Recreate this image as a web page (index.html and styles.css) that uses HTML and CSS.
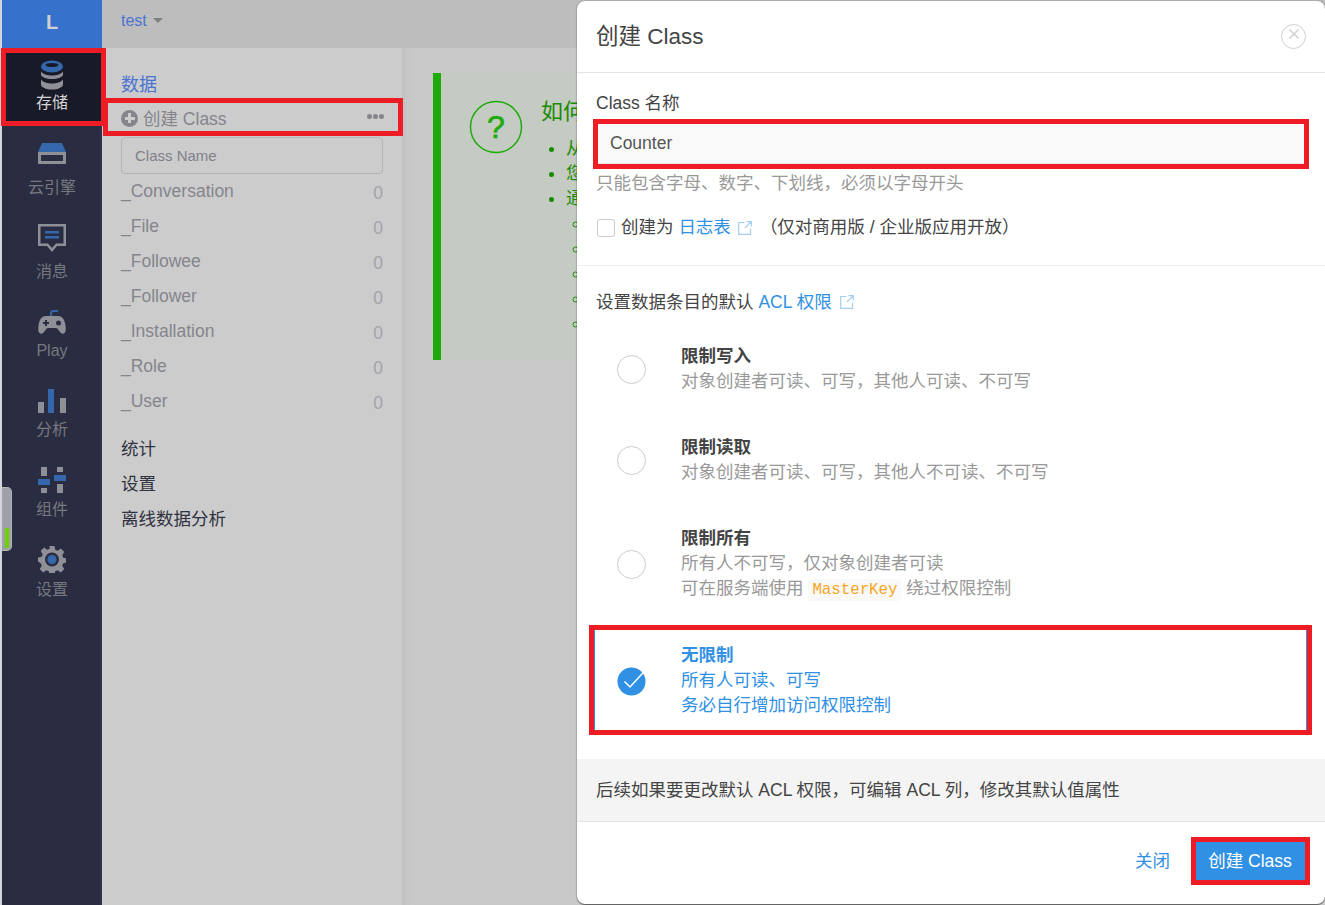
FILE: index.html
```html
<!DOCTYPE html>
<html lang="zh-CN">
<head>
<meta charset="utf-8">
<title>创建 Class</title>
<link rel="stylesheet" href="styles.css">
</head>
<body>
<div class="app">
  <nav class="rail">
    <div class="logo">L</div>
    <a class="rail-item item-db active">
      <svg width="28" height="30" viewBox="0 0 28 30"><path class="g" d="M3 11.500v3c0 2.600 5 4.500 11 4.500s11-1.900 11-4.500v-3c-2 2.600-6.500 4-11 4s-9-1.400-11-4zM3 19.500v5c0 2.900 5 5 11 5s11-2.100 11-5v-5c-2 2.700-6.500 4-11 4s-9-1.300-11-4z"/><ellipse class="b" cx="14" cy="6.500" rx="11" ry="6"/><ellipse cx="14" cy="5" rx="6.500" ry="2" fill="#181a28"/></svg>
      <span>存储</span>
    </a>
    <a class="rail-item item-engine">
      <svg width="28" height="21" viewBox="0 0 28 21"><path class="b" d="M4 0h20l4 9H0z"/><path class="g" fill-rule="evenodd" d="M0 9h28v12H0zM3 12v6h22v-6z"/></svg>
      <span>云引擎</span>
    </a>
    <a class="rail-item item-msg">
      <svg width="28" height="28" viewBox="0 0 28 28"><path class="g" fill-rule="evenodd" d="M0 0h28v22h-9l-5 6-5-6H0zM2.500 2.500v17h7.500l4 4.500 4-4.500h7.500v-17z"/><path class="b" d="M7 7h14v2.500H7zM7 12h14v2.500H7z"/></svg>
      <span>消息</span>
    </a>
    <a class="rail-item item-play">
      <svg width="28" height="25" viewBox="0 0 28 25"><path class="g" d="M8 6h12c4 0 6 3 7 7 .8 3.500 1.500 8-.5 10-2.200 2-4.500-.5-6-3-.8-1.300-1.500-2-3-2h-7c-1.500 0-2.200.7-3 2-1.500 2.500-3.800 5-6 3-2-2-1.300-6.500-.5-10C2 9 4 6 8 6z"/><path d="M7 10v2H5v2h2v2h2v-2h2v-2H9v-2z" fill="#2a2d42"/><circle cx="20.500" cy="13" r="2.500" fill="#2a2d42"/><path d="M13 6V3.500C13 2 14 1 15.500 1H20" fill="none" stroke="#3567ad" stroke-width="2"/></svg>
      <span>Play</span>
    </a>
    <a class="rail-item item-chart">
      <svg width="28" height="24" viewBox="0 0 28 24"><path class="g" d="M0 13h6v11H0zM22 9h6v15h-6z"/><path class="b" d="M10 0h6v24h-6z"/></svg>
      <span>分析</span>
    </a>
    <a class="rail-item item-comp">
      <svg width="28" height="27" viewBox="0 0 28 27"><path class="g" d="M3 0h6v9H3zM19 0h6v5h-6zM3 21h6v5H3zM19 17h6v9h-6z"/><path class="b" d="M16 8h12v6H16zM0 12h12v6H0z"/></svg>
      <span>组件</span>
    </a>
    <a class="rail-item item-gear">
      <svg width="28" height="27" viewBox="0 0 28 27"><path class="g" fill-rule="evenodd" d="M11.500 0h5l.7 3.700 2.500 1 3.100-2.100 3.500 3.500-2.100 3.100 1 2.500 3.700.7v4.200l-3.700.7-1 2.500 2.100 3.100-3.500 3.500-3.100-2.100-2.500 1-.7 3.700h-5l-.7-3.700-2.500-1-3.100 2.100-3.500-3.500 2.100-3.100-1-2.500L0 15.600v-4.200l3.700-.7 1-2.500-2.100-3.100 3.500-3.500 3.100 2.100 2.500-1zM14 6.500a7 7 0 1 0 0 14 7 7 0 0 0 0-14z"/><circle class="b" cx="14" cy="13.500" r="4.500"/></svg>
      <span>设置</span>
    </a>
  </nav>

  <div class="main">
    <header class="topbar"><a class="app-name">test</a><i class="caret"></i></header>
    <div class="columns">
      <aside class="side">
        <a class="side-head">数据</a>
        <div class="create-row">
          <span class="plus"></span><span class="create-label">创建 Class</span>
          <span class="dots"><i></i><i></i><i></i></span>
        </div>
        <input class="filter" placeholder="Class Name">
        <ul class="class-list">
          <li><span>_Conversation</span><b>0</b></li>
          <li><span>_File</span><b>0</b></li>
          <li><span>_Followee</span><b>0</b></li>
          <li><span>_Follower</span><b>0</b></li>
          <li><span>_Installation</span><b>0</b></li>
          <li><span>_Role</span><b>0</b></li>
          <li><span>_User</span><b>0</b></li>
        </ul>
        <a class="side-link">统计</a>
        <a class="side-link">设置</a>
        <a class="side-link">离线数据分析</a>
      </aside>
      <section class="content">
        <div class="callout">
          <svg class="help" width="54" height="54" viewBox="0 0 54 54"><circle cx="27" cy="27" r="25.500" fill="none" stroke="#1eab0a" stroke-width="1.500"/></svg>
          <span class="help-mark">?</span>
          <div class="callout-body">
            <h4>如何创建</h4>
            <ul>
              <li>从这里开始</li>
              <li>您可以创建</li>
              <li>通过以下方式
                <ul>
                  <li>控制台</li>
                  <li>命令行</li>
                  <li>接口</li>
                  <li>脚本</li>
                  <li>导入</li>
                </ul>
              </li>
            </ul>
          </div>
        </div>
      </section>
    </div>
  </div>

  <div class="scroll-pill"><i></i></div>

  <div class="modal">
    <header class="modal-head">
      <h3>创建 Class</h3>
      <span class="close"><svg width="12" height="12" viewBox="0 0 12 12"><path d="M1.500 1.500l9 9M10.500 1.500l-9 9" stroke="#d0d0d0" stroke-width="1.500"/></svg></span>
    </header>
    <div class="modal-form">
      <label class="field-label">Class 名称</label>
      <input class="name-input" value="Counter">
      <p class="hint">只能包含字母、数字、下划线，必须以字母开头</p>
      <div class="check-row">
        <span class="check"></span>
        <span>创建为 <a class="link">日志表</a></span>
        <svg class="ext" width="14" height="14" viewBox="0 0 14 14"><path d="M6.500 1.500H.7v11.800h11.800V7.500M8.500.7h4.800v4.800M13.300.7L7 7" fill="none" stroke="#a3cff3" stroke-width="1.200"/></svg>
        <span class="note">（仅对商用版 / 企业版应用开放）</span>
      </div>
    </div>
    <div class="modal-acl">
      <div class="acl-title">设置数据条目的默认 <a class="link">ACL 权限</a><svg class="ext ext-acl" width="14" height="14" viewBox="0 0 14 14"><path d="M6.500 1.500H.7v11.800h11.800V7.500M8.500.7h4.800v4.800M13.300.7L7 7" fill="none" stroke="#a3cff3" stroke-width="1.200"/></svg></div>
      <div class="option">
        <span class="radio"></span>
        <div class="opt-text"><strong>限制写入</strong><p>对象创建者可读、可写，其他人可读、不可写</p></div>
      </div>
      <div class="option">
        <span class="radio"></span>
        <div class="opt-text"><strong>限制读取</strong><p>对象创建者可读、可写，其他人不可读、不可写</p></div>
      </div>
      <div class="option opt-last">
        <span class="radio"></span>
        <div class="opt-text"><strong>限制所有</strong><p>所有人不可写，仅对象创建者可读</p><p>可在服务端使用 <code>MasterKey</code> 绕过权限控制</p></div>
      </div>
      <div class="option selected">
        <svg class="radio-on" width="32" height="30" viewBox="0 0 32 30"><circle cx="14.500" cy="15.500" r="14" fill="#3090e4"/><path d="M7.500 15.500l5.500 5.500L29.500 3" fill="none" stroke="#fff" stroke-width="1.500"/></svg>
        <div class="opt-text"><strong>无限制</strong><p>所有人可读、可写</p><p>务必自行增加访问权限控制</p></div>
      </div>
    </div>
    <div class="notice">后续如果要更改默认 ACL 权限，可编辑 ACL 列，修改其默认值属性</div>
    <footer class="modal-foot">
      <a class="link close-link">关闭</a>
      <button class="primary">创建 Class</button>
    </footer>
  </div>

  <div class="mark mark-nav"></div>
  <div class="mark mark-create"></div>
  <div class="mark mark-input"></div>
  <div class="mark mark-option"></div>
  <div class="mark mark-button"></div>
</div>
</body>
</html>
```
FILE: styles.css
```css
* { box-sizing: border-box; }
html, body { margin: 0; padding: 0; height: 100%; overflow: hidden; }
body { font-family: "Liberation Sans", "Noto Sans CJK SC", sans-serif; font-size: 17.5px; line-height: 25px; color: #333; background: #c9c9c9; }
p, h3, h4, ul { margin: 0; padding: 0; }
.app { position: relative; display: flex; width: 1325px; height: 905px; overflow: hidden; padding-left: 2px; background: #d5d5dc; }

/* rail */
.rail { width: 100px; flex: none; background: #2a2d42; box-shadow: inset -3px 0 3px -2px #363a50; display: flex; flex-direction: column; }
.logo { height: 48px; background: #3671cc; color: #d0d0d0; font-size: 20px; font-weight: bold; line-height: 44px; text-align: center; }
.rail-item { display: flex; flex-direction: column; align-items: center; color: #76777f; font-size: 16px; line-height: 20px; flex: none; }
.rail-item .g { fill: #8f8f98; }
.rail-item .b { fill: #3567ad; }
.active { color: #d6d6d6; background: #181a28; }
.item-db { height: 78px; padding-top: 12px; gap: 3px; }
.item-engine { height: 84px; padding-top: 17px; gap: 14px; }
.item-msg { height: 84px; padding-top: 14px; gap: 10px; }
.item-play { height: 79px; padding-top: 16px; gap: 6px; }
.item-chart { height: 79px; padding-top: 16px; gap: 7px; }
.item-comp { height: 80px; padding-top: 15px; gap: 6px; }
.item-gear { height: 80px; padding-top: 14px; gap: 7px; }

/* main */
.main { flex: 1; min-width: 0; display: flex; flex-direction: column; }
.topbar { height: 48px; flex: none; background: #bdbdbd; padding: 0 19px 8px; display: flex; align-items: center; gap: 6px; }
.app-name { color: #4a74d0; font-size: 16px; }
.caret { width: 0; height: 0; border: 5px solid transparent; border-top-color: #808080; border-bottom: 0; }
.columns { flex: 1; display: flex; min-height: 0; }
.side { width: 300px; flex: none; background: #ccc; padding: 24px 19px 0; }
.side-head { display: block; color: #4a74d0; font-size: 18px; line-height: 26px; }
.create-row { display: flex; align-items: center; height: 36px; margin-top: 3px; color: #85858c; font-size: 17.500px; }
.plus { width: 17px; height: 17px; border-radius: 50%; background: #85858c; margin-right: 5px; margin-top: -2px; position: relative; flex: none; }
.plus::before { content: ""; position: absolute; left: 3.500px; top: 7px; width: 10px; height: 3px; background: #ccc; }
.plus::after { content: ""; position: absolute; left: 7px; top: 3.500px; width: 3px; height: 10px; background: #ccc; }
.create-label { flex: 1; }
.dots { display: flex; gap: 1px; margin-top: -5px; margin-right: -1px; }
.dots i { width: 5px; height: 5px; border-radius: 50%; background: #85858c; }
.filter { display: block; width: 262px; height: 37px; padding: 0 13px; border: 1px solid #b5b5b5; border-radius: 4px; background: #ccc; font: 15px "Liberation Sans", sans-serif; }
.filter::placeholder { color: #80808a; opacity: 1; }
.class-list { list-style: none; margin-bottom: 13px; }
.class-list li { height: 35px; display: flex; justify-content: space-between; align-items: center; color: #85858c; }
.class-list b { font-weight: normal; color: #a3a3a8; padding-top: 3px; }
.side-link { display: block; height: 35px; line-height: 35px; color: #2f3240; }
.content { flex: 1; background: #c9c9c9; box-shadow: inset 10px 0 8px -8px #bcbcbc; padding: 25px 30px 0 31px; min-width: 0; }
.callout { position: relative; display: flex; height: 287px; background: #c4cbc3; border-left: 8px solid #1eab0a; padding: 26px 0 0 28px; gap: 18px; color: #1a8a00; }
.help { flex: none; margin-top: 1px; }
.help-mark { position: absolute; left: 28px; top: 27px; width: 54px; text-align: center; font-size: 32px; line-height: 54px; color: #1eab0a; -webkit-text-stroke: .7px #1eab0a; }
.callout-body h4 { font-weight: normal; font-size: 22px; line-height: 26px; margin: 0 0 11px; }
.callout-body ul { padding-left: 25px; }
.callout-body ul ul { list-style: circle; padding-left: 24px; }

/* scroll pill */
.scroll-pill { position: absolute; left: 2px; top: 487px; width: 10px; height: 64px; border-radius: 0 5px 5px 0; background: #a0a1a8; border: 1px solid #b5b5b5; border-left: 0; }
.scroll-pill i { position: absolute; left: 3px; top: 40px; width: 4px; height: 20px; background: #6fd200; }

/* modal */
.modal { position: absolute; left: 577px; top: 1px; width: 748px; height: 903px; background: #fff; border-radius: 8px; box-shadow: 0 1px 1px rgba(0,0,0,.5), 0 0 2px rgba(0,0,0,.35); display: flex; flex-direction: column; overflow: hidden; }
.modal-head { height: 72px; flex: none; border-bottom: 1px solid #e5e5e5; padding: 0 19px; display: flex; align-items: center; justify-content: space-between; }
.modal-head h3 { font-weight: normal; font-size: 22.500px; color: #444; }
.close { width: 25px; height: 25px; border: 1px solid #d0d0d0; border-radius: 50%; display: flex; align-items: center; justify-content: center; padding-bottom: 5px; margin-top: -1px; }
.modal-form { height: 193px; flex: none; padding: 18px 19px 0; border-bottom: 1px solid #eee; }
.field-label { display: block; color: #444; line-height: 25px; }
.name-input { display: block; width: 710px; height: 42px; margin-top: 6px; padding: 0 13px; border: 1px solid #e5e5e5; background: #f9f9f9; color: #555; font: 17.500px "Liberation Sans", "Noto Sans CJK SC", sans-serif; }
.hint { color: #999; margin-top: 7px; }
.check-row { display: flex; align-items: center; margin-top: 19px; color: #444; }
.check { width: 18px; height: 18px; border: 1px solid #ccc; border-radius: 3px; margin: 0 6px 0 1px; flex: none; }
.link { color: #3090e4; }
.ext { margin-left: 7px; vertical-align: -1px; flex: none; }
.ext-acl { margin-left: 8px; }
.note { margin-left: 8px; }
.modal-acl { flex: 1; padding: 24px 18px 0 17px; }
.acl-title { color: #444; margin-left: 2px; margin-bottom: 15px; height: 25px; }
.option { display: flex; align-items: center; padding: 13px 0 13px 22px; margin-bottom: 13px; border: 1px solid transparent; }
.opt-last { margin-bottom: 12px; }
.option.selected { border-left: 1px solid #3090e4; border-right: 1px solid #3090e4; }
.radio { width: 29px; height: 29px; border: 1px solid #ccc; border-radius: 50%; flex: none; }
.radio-on { flex: none; margin-right: -3px; }
.opt-text { margin-left: 35px; color: #999; }
.opt-text strong { display: block; color: #444; }
.selected .opt-text, .selected .opt-text strong { color: #3090e4; }
code { font-family: "Liberation Mono", monospace; font-size: 15.750px; color: #f5a623; background: #f9f9f9; padding: 2px 4px; border-radius: 3px; }
.notice { height: 63px; flex: none; background: #f4f4f4; border-bottom: 1px solid #e5e5e5; padding: 0 19px; display: flex; align-items: center; color: #444; }
.modal-foot { height: 82px; flex: none; display: flex; justify-content: flex-end; align-items: center; padding: 0 20px 4px 0; gap: 25px; }
.primary { width: 110px; height: 38px; border: 0; background: #3090e4; color: #fff; font: 17.500px "Liberation Sans", "Noto Sans CJK SC", sans-serif; padding: 0 0 3px; }

/* red annotations */
.mark { position: absolute; border: 5px solid #ee1c25; pointer-events: none; }
.mark-nav { left: 1px; top: 48px; width: 105px; height: 78px; }
.mark-create { left: 103px; top: 98px; width: 300px; height: 38px; }
.mark-input { left: 593px; top: 119px; width: 716px; height: 50px; }
.mark-option { left: 589px; top: 625px; width: 723px; height: 110px; }
.mark-button { left: 1191px; top: 837px; width: 119px; height: 48px; }
```
